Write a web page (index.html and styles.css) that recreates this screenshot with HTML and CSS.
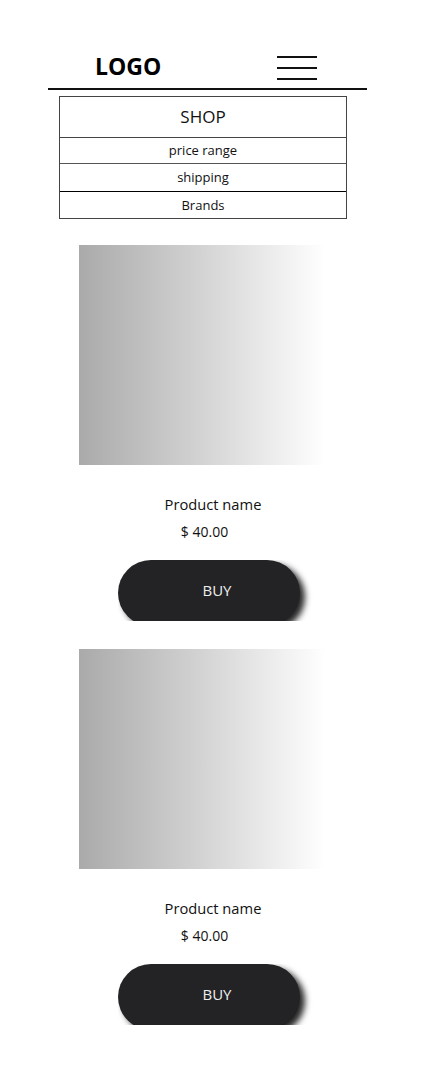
FILE: index.html
```html
<!DOCTYPE html>
<html lang="en">
<head>
<meta charset="utf-8">
<title>Shop</title>
<link rel="stylesheet" href="styles.css">
</head>
<body>
<div class="page">
  <header class="header">
    <div class="logo">LOGO</div>
    <div class="burger"><span></span><span></span><span></span></div>
  </header>
  <nav class="menu">
    <div class="menu-row menu-main">SHOP</div>
    <div class="menu-row menu-r1">price range</div>
    <div class="menu-row menu-r2">shipping</div>
    <div class="menu-row menu-r3">Brands</div>
  </nav>
  <section class="product">
    <div class="pimg"></div>
    <div class="pname">Product name</div>
    <div class="pprice">$ 40.00</div>
    <div class="btn-wrap"><button class="btn">BUY</button></div>
  </section>
  <section class="product">
    <div class="pimg"></div>
    <div class="pname">Product name</div>
    <div class="pprice">$ 40.00</div>
    <div class="btn-wrap"><button class="btn">BUY</button></div>
  </section>
</div>
</body>
</html>
```
FILE: styles.css
```css
html, body {
  margin: 0;
  padding: 0;
  background: #fff;
}
body {
  font-family: "Open Sans", "Liberation Sans", sans-serif;
  color: #111;
}
.page {
  width: 427px;
  padding-top: 50px;
}
.header {
  margin-left: 48px;
  height: 38px;
  border-bottom: 2px solid #111;
  display: flex;
  justify-content: space-between;
  align-items: flex-start;
  padding: 0 50px 0 47px;
  box-sizing: content-box;
  width: 222px;
}
.logo {
  font-size: 23px;
  font-weight: 700;
  line-height: 32px;
  color: #000;
}
.burger {
  margin-top: 6px;
  width: 40px;
  display: flex;
  flex-direction: column;
  gap: 9px;
}
.burger span {
  display: block;
  height: 2px;
  background: #111;
}
.menu {
  margin: 6px 0 0 59px;
  width: 286px;
  border: 1px solid #444;
  border-bottom: none;
}
.menu-row {
  border-bottom: 1px solid #444;
  text-align: center;
  font-size: 13px;
  color: #111;
}
.menu-main {
  height: 40px;
  line-height: 40px;
  font-size: 17px;
  font-weight: 400;
}
.menu-r1 { height: 25px; line-height: 25px; border-bottom-color: #555; }
.menu-r2 { height: 27px; line-height: 27px; border-bottom-color: #000; }
.menu-r3 { height: 26px; line-height: 26px; }
.product {
  width: 268px;
  margin-left: 79px;
}
.pimg {
  margin-top: 26px;
  width: 246px;
  height: 220px;
  background: linear-gradient(to right, #aaaaaa 0%, #cfcfcf 45%, #ffffff 100%);
}
.product + .product .pimg {
  margin-top: 28px;
}
.pname {
  margin-top: 29px;
  font-size: 14.7px;
  line-height: 20px;
  text-align: center;
  color: #111;
}
.pprice {
  margin-top: 8px;
  font-size: 14px;
  line-height: 20px;
  text-align: center;
  padding-right: 17px;
  color: #111;
}
.btn-wrap {
  margin-top: 18px;
  margin-left: 39px;
  width: 200px;
  height: 61px;
  overflow: hidden;
}
.btn {
  display: block;
  width: 182px;
  height: 66px;
  border: none;
  border-radius: 33px;
  background: #232325;
  color: #eee;
  font-family: "Open Sans", "Liberation Sans", sans-serif;
  font-size: 15px;
  padding: 0 0 6px 16px;
  box-shadow: 5px 4px 6px rgba(0, 0, 0, 0.85);
}
```
